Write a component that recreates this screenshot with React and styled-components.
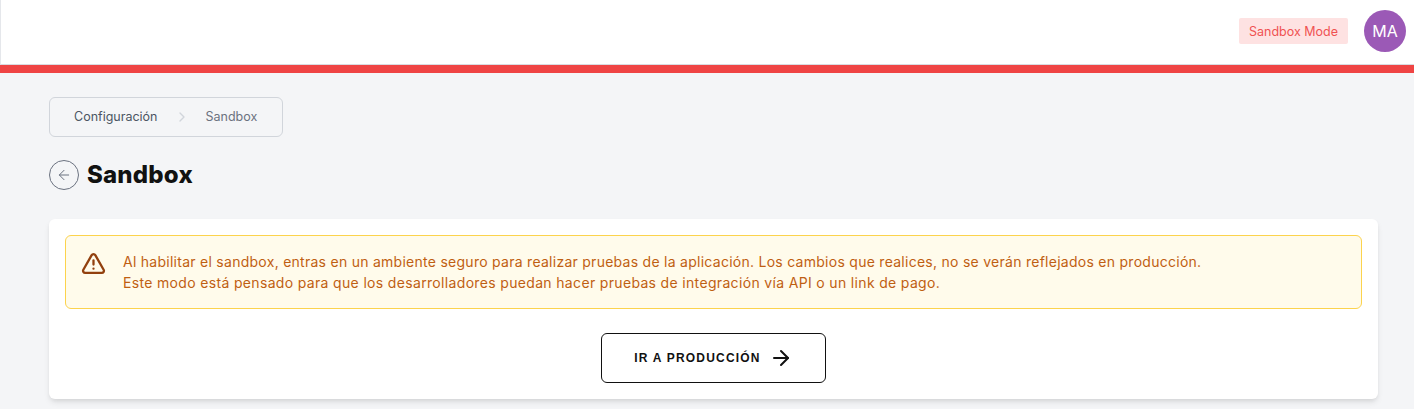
import React from "react";
import styled, { createGlobalStyle } from "styled-components";
import { ChevronRight, ArrowLeft, ArrowRight, TriangleAlert } from "lucide-react";

const GlobalStyle = createGlobalStyle`
  html, body {
    margin: 0;
    padding: 0;
    background: #f4f5f7;
    overflow: hidden;
  }
  * {
    box-sizing: border-box;
  }
`;

const Page = styled.div`
  height: 409px;
  font-family: "Inter", "Noto Sans", sans-serif;
  background: #f4f5f7;
`;

const Header = styled.header`
  height: 65px;
  background: #fff;
  border-left: 1px solid #e5e7eb;
  border-bottom: 1px solid #d9dbe0;
  display: flex;
  align-items: center;
  justify-content: flex-end;
  padding: 0 8px 2px 0;
  gap: 16px;
`;

const ModeBadge = styled.span`
  height: 26px;
  padding: 0 10px;
  display: flex;
  align-items: center;
  background: #fee2e2;
  color: #f05252;
  font-size: 12.5px;
  border-radius: 2px;
`;

const Avatar = styled.div`
  width: 42px;
  height: 42px;
  border-radius: 50%;
  background: #9b59b6;
  color: #fff;
  font-size: 16px;
  display: flex;
  align-items: center;
  justify-content: center;
`;

const RedBar = styled.div`
  height: 8px;
  background: #ef4444;
`;

const Content = styled.main`
  padding: 24px 36px 0 49px;
`;

const Breadcrumb = styled.nav`
  width: 234px;
  height: 40px;
  border: 1px solid #d1d5db;
  border-radius: 6px;
  display: flex;
  align-items: center;
  padding: 0 0 2px 24px;
  font-size: 12.5px;
`;

const Crumb = styled.span`
  color: ${(props) => (props.$current ? "#6b7280" : "#4b5563")};
`;

const CrumbSeparator = styled(ChevronRight)`
  width: 16px;
  height: 16px;
  margin: 2px 16px 0 16px;
  color: #d1d5db;
`;

const TitleRow = styled.div`
  display: flex;
  align-items: center;
  gap: 8px;
  margin-top: 23px;
`;

const BackButton = styled.button`
  width: 30px;
  height: 30px;
  padding: 0;
  border: 1px solid #6b7280;
  border-radius: 50%;
  background: transparent;
  color: #6b7280;
  display: flex;
  align-items: center;
  justify-content: center;
`;

const Title = styled.h1`
  margin: 0;
  font-size: 24px;
  line-height: 30px;
  font-weight: 800;
  letter-spacing: 0.2px;
  color: #111111;
`;

const Card = styled.section`
  margin-top: 29px;
  height: 180px;
  background: #fff;
  border-radius: 6px;
  box-shadow: 0 4px 6px -1px rgba(0, 0, 0, 0.1), 0 2px 4px -1px rgba(0, 0, 0, 0.06);
  padding: 16px;
  display: flex;
  flex-direction: column;
  align-items: center;
`;

const Alert = styled.div`
  width: 100%;
  height: 74px;
  background: #fffbeb;
  border: 1px solid #fcd34d;
  border-radius: 6px;
  display: flex;
  align-items: flex-start;
  padding: 15px 0 0 15px;
  gap: 17px;
`;

const AlertIcon = styled(TriangleAlert)`
  width: 25px;
  height: 25px;
  color: #92400e;
  flex-shrink: 0;
`;

const AlertText = styled.div`
  color: #bf5f12;
  font-size: 14px;
  line-height: 21px;
`;

const AlertLine = styled.p`
  margin: 0;
  letter-spacing: ${(props) => props.$spacing};
`;

const ProductionButton = styled.button`
  margin-top: 24px;
  width: 225px;
  height: 50px;
  background: #fff;
  border: 1px solid #111111;
  border-radius: 6px;
  color: #111111;
  font-family: "Liberation Sans", Arial, sans-serif;
  font-size: 12px;
  font-weight: 700;
  letter-spacing: 1.2px;
  display: flex;
  align-items: center;
  justify-content: center;
  gap: 8px;
`;

export default function App() {
  return (
    <Page>
      <GlobalStyle />
      <Header>
        <ModeBadge>Sandbox Mode</ModeBadge>
        <Avatar>MA</Avatar>
      </Header>
      <RedBar />
      <Content>
        <Breadcrumb>
          <Crumb>Configuración</Crumb>
          <CrumbSeparator />
          <Crumb $current>Sandbox</Crumb>
        </Breadcrumb>
        <TitleRow>
          <BackButton>
            <ArrowLeft size={16} strokeWidth={1.5} />
          </BackButton>
          <Title>Sandbox</Title>
        </TitleRow>
        <Card>
          <Alert>
            <AlertIcon strokeWidth={2.2} />
            <AlertText>
              <AlertLine $spacing="0.268px">
                Al habilitar el sandbox, entras en un ambiente seguro para realizar pruebas de la aplicación. Los cambios que realices, no se verán reflejados en producción.
              </AlertLine>
              <AlertLine $spacing="0.335px">
                Este modo está pensado para que los desarrolladores puedan hacer pruebas de integración vía API o un link de pago.
              </AlertLine>
            </AlertText>
          </Alert>
          <ProductionButton>
            IR A PRODUCCIÓN
            <ArrowRight size={24} strokeWidth={2} />
          </ProductionButton>
        </Card>
      </Content>
    </Page>
  );
}
